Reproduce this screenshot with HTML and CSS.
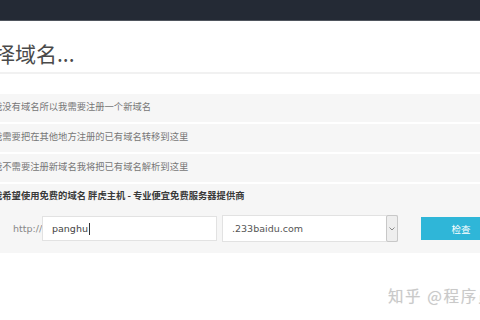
FILE: index.html
```html
<!DOCTYPE html>
<html lang="zh-CN">
<head>
<meta charset="utf-8">
<title>选择域名</title>
<link rel="stylesheet" href="styles.css">
</head>
<body>
<header class="topbar"></header>
<main class="page">
  <h1 class="title">选择域名...</h1>
  <div class="options">
    <div class="option">我没有域名所以我需要注册一个新域名</div>
    <div class="option">我需要把在其他地方注册的已有域名转移到这里</div>
    <div class="option">我不需要注册新域名我将把已有域名解析到这里</div>
    <div class="option option-free">
      <div class="option-label">我希望使用免费的域名 胖虎主机 - 专业便宜免费服务器提供商</div>
      <div class="domain-form">
        <span class="prefix">http://</span>
        <div class="field field-name">panghu<span class="caret"></span></div>
        <div class="field field-select">
          <span class="select-value">.233baidu.com</span>
          <span class="select-arrow"><svg width="6" height="4" viewBox="0 0 6 4"><path d="M0.5 0.5 L3 3 L5.5 0.5" fill="none" stroke="#888" stroke-width="1"/></svg></span>
        </div>
        <div class="check-btn">检查</div>
      </div>
    </div>
  </div>
</main>
<div class="watermark">知乎 @程序员</div>
</body>
</html>
```
FILE: styles.css
```css
html, body {
  margin: 0;
  padding: 0;
}
body {
  width: 480px;
  height: 320px;
  overflow: hidden;
  background: #ffffff;
  font-family: "Noto Sans CJK SC", "Noto Sans", sans-serif;
  position: relative;
}
.topbar {
  height: 20px;
  background: #242a35;
  border-bottom: 1px solid #4f555d;
}
.page {
  margin-left: -28px;
  width: 540px;
}
.title {
  margin: 0;
  padding: 20px 0 7px 1px;
  height: 24px;
  line-height: 24px;
  font-size: 21px;
  font-weight: normal;
  color: #4a4a4a;
  border-bottom: 2px solid #f1f1f1;
}
.options {
  margin-top: 20px;
  display: flex;
  flex-direction: column;
  gap: 2px;
}
.option {
  background: #f6f6f6;
  padding: 3px 0 7px 21px;
  line-height: 18px;
  font-size: 9.3px;
  color: #777;
}
.option-free {
  padding: 2px 0 11px 21px;
}
.option-label {
  font-weight: bold;
  color: #3a3a3a;
}
.domain-form {
  margin-top: 11px;
  margin-left: 20px;
  display: flex;
  align-items: center;
  font-family: "DejaVu Sans", "Noto Sans CJK SC", sans-serif;
}
.prefix {
  font-size: 9.5px;
  color: #888;
  width: 29px;
}
.field {
  box-sizing: border-box;
  height: 25px;
  background: #fff;
  border: 1px solid #e2e2e2;
  display: flex;
  align-items: center;
  font-size: 9.5px;
  color: #444;
}
.field-name {
  width: 175px;
  padding-left: 9px;
}
.caret {
  display: inline-block;
  width: 1px;
  height: 12px;
  background: #333;
  margin-left: 1px;
}
.field-select {
  width: 176px;
  margin-left: 5px;
  padding-left: 9px;
  justify-content: space-between;
  color: #555;
  height: 27px;
}
.select-arrow {
  box-sizing: border-box;
  width: 12px;
  height: 27px;
  margin-right: -1px;
  background: #eeeeee;
  border: 1px solid #c8c8c8;
  border-radius: 2px;
  display: flex;
  align-items: center;
  justify-content: center;
}
.check-btn {
  margin-left: 23px;
  width: 80px;
  height: 23px;
  background: #2fb6d8;
  color: #fff;
  font-family: "Noto Sans CJK SC", sans-serif;
  font-size: 9.5px;
  display: flex;
  align-items: center;
  justify-content: center;
}
.watermark {
  position: absolute;
  left: 388px;
  top: 284px;
  font-size: 15.5px;
  color: #c9c9c9;
  white-space: nowrap;
  letter-spacing: 1.6px;
  text-shadow: 0 0 1px #e6e6e6;
}
```
